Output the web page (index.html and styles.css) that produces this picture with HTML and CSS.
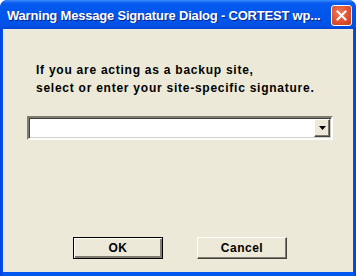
FILE: index.html
```html
<!DOCTYPE html>
<html>
<head>
  <title>Warning Message Signature Dialog</title>
  <link rel="stylesheet" href="styles.css">
</head>
<body>
  <div class="window">
    <div class="titlebar">
      <span class="title">Warning Message Signature Dialog - CORTEST wp...</span>
      <button class="close-btn" title="Close">
        <svg width="13" height="13" viewBox="0 0 13 13">
          <path d="M2.5 2.5 L10.5 10.5 M10.5 2.5 L2.5 10.5" stroke="#fff" stroke-width="2" stroke-linecap="square"/>
        </svg>
      </button>
    </div>

    <div class="client">
      <p class="message">
        If you are acting as a backup site,<br>
        select or enter your site-specific signature.
      </p>

      <div class="combo">
        <input type="text" class="combo-input" value="">
        <span class="combo-arrow">
          <svg width="7" height="4" viewBox="0 0 7 4">
            <path d="M0 0 H7 L3.5 4 Z" fill="#000"/>
          </svg>
        </span>
      </div>

      <div class="actions">
        <button class="btn btn-default">OK</button>
        <button class="btn">Cancel</button>
      </div>
    </div>
  </div>
</body>
</html>
```

FILE: styles.css
```css
body {
  margin: 0;
  padding: 0;
  background: #fff;
  font-family: 'Liberation Sans', Arial, sans-serif;
}
.window {
  width: 356px;
  height: 276px;
  display: flex;
  flex-direction: column;
  background: linear-gradient(to right, #0040d8 0, #0058ee 3px, #0058ee 353px, #0040d0 356px);
  border-radius: 7px 7px 0 0;
  box-sizing: border-box;
  overflow: hidden;
}
.titlebar {
  height: 29px;
  flex: none;
  display: flex;
  align-items: center;
  padding: 0 4px 0 7px;
  background: linear-gradient(to bottom, #3c8cf8 0, #0a5cf0 3px, #0058ee 8px, #0055ea 20px, #0050e4 26px, #0046d6 29px);
  border-radius: 7px 7px 0 0;
}
.title {
  flex: 1;
  min-width: 0;
  overflow: hidden;
  color: #fff;
  font-family: 'Liberation Sans', Arial, sans-serif;
  font-weight: bold;
  font-size: 13px;
  letter-spacing: -0.2px;
  white-space: nowrap;
  text-shadow: 1px 1px #0a1e8a;
  padding-top: 1px;
}
.close-btn {
  width: 21px;
  height: 21px;
  flex: none;
  margin-top: 1px;
  padding: 0;
  border: 1px solid #fff;
  border-radius: 3px;
  background: radial-gradient(circle at 40% 35%, #ee7a5c 0, #e0512f 55%, #c43c1c 100%);
  display: flex;
  align-items: center;
  justify-content: center;
  box-sizing: border-box;
}
.client {
  flex: 1;
  margin: 0 3px 4px 3px;
  background: #ece9d8;
  padding: 32px 0 0 0;
  display: flex;
  flex-direction: column;
}
.message {
  margin: 0 0 0 33px;
  font-size: 12px;
  font-weight: bold;
  line-height: 18px;
  letter-spacing: 0.75px;
  color: #000;
}
.combo {
  margin: 19px 0 0 24px;
  width: 306px;
  height: 24px;
  box-sizing: border-box;
  display: flex;
  background: #fff;
  border-style: solid;
  border-width: 2px;
  border-color: #807d70 #fff #fff #807d70;
  box-shadow: inset 1px 1px #404040, inset -1px -1px #d4d0c8;
  padding: 1px;
}
.combo-input {
  flex: 1;
  border: none;
  outline: none;
  background: transparent;
  min-width: 0;
  padding: 0 2px;
}
.combo-arrow {
  width: 16px;
  flex: none;
  background: #ece9d8;
  box-sizing: border-box;
  border-style: solid;
  border-width: 1px;
  border-color: #fff #404040 #404040 #fff;
  box-shadow: inset -1px -1px #807d70;
  display: flex;
  align-items: center;
  justify-content: center;
}
.actions {
  margin-top: auto;
  margin-bottom: 13px;
  padding-left: 70px;
  display: flex;
  gap: 34px;
}
.btn {
  width: 90px;
  height: 22px;
  box-sizing: border-box;
  padding: 0;
  font-family: 'Liberation Sans', Arial, sans-serif;
  font-size: 12px;
  font-weight: bold;
  letter-spacing: 0.5px;
  color: #000;
  background: #ece9d8;
  border-style: solid;
  border-width: 1px;
  border-color: #fff #404040 #404040 #fff;
  box-shadow: inset -1px -1px #807d70;
}
.btn-default {
  border: 1px solid #000;
  box-shadow: inset 1px 1px #fff, inset -2px -2px #807d70;
}
```
